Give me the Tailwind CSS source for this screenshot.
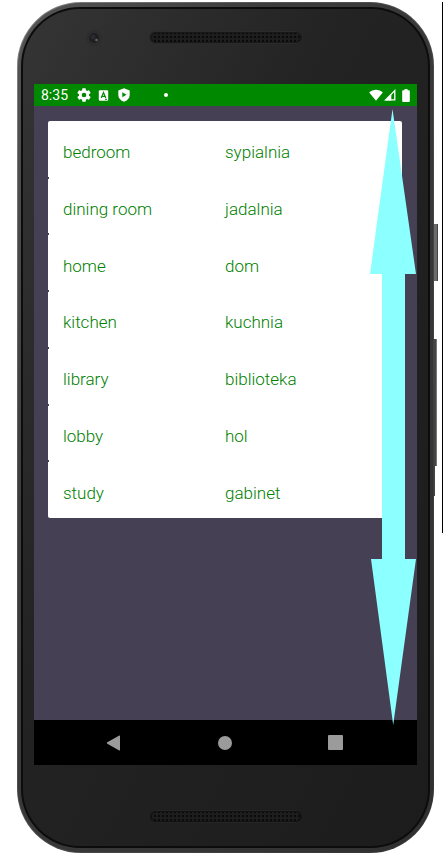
<!DOCTYPE html>
<html lang="en">
<head>
<meta charset="utf-8">
<meta name="viewport" content="width=device-width, initial-scale=1">
<title>Vocabulary: rooms</title>
<script src="https://cdn.jsdelivr.net/npm/@tailwindcss/browser@4"></script>
</head>
<body class="bg-white font-[Roboto,sans-serif]">
<main class="relative pt-[2px] pr-[9px] pb-[2px] pl-[17px]">
  <!-- page rule at the right edge -->
  <div class="absolute top-[2px] right-0 h-[531px] w-px bg-black"></div>

  <div class="relative">
    <!-- side buttons -->
    <div class="absolute top-[222px] -right-[4px] h-[57px] w-[4px] border-r border-[#444] bg-[#6c6c6c]"></div>
    <div class="absolute top-[337px] -right-[3px] h-[127px] w-[3px] border-r border-[#777] bg-[#444]"></div>
    <div class="absolute top-[337px] -right-px h-[157px] w-px bg-[#444]"></div>

    <!-- outer rim -->
    <div class="relative rounded-[64px] bg-linear-to-br from-[#858585] via-[#555] via-30% to-[#333] p-px">
      <div class="rounded-[63px] bg-linear-to-br from-[#555] via-[#3c3c3c] via-30% to-[#303030] px-[3px] py-[4px]">
        <div class="rounded-[59px] bg-[#0c0c0c] p-[2px]">
          <div class="rounded-[57px] bg-linear-to-br from-[#353535] via-[#232323] via-40% to-[#1c1c1c] px-[11px]">

            <!-- earpiece and camera -->
            <div class="relative flex h-[75px] items-start justify-center pt-[22px]">
              <svg class="absolute top-[20px] left-[51px] h-[18px] w-[18px]" viewBox="0 0 18 18" aria-hidden="true">
                <circle cx="9" cy="9" r="8" fill="#2d2d2d"/>
                <circle cx="9" cy="9" r="5" fill="#1f1f20"/>
                <circle cx="8" cy="8" r="2.500" fill="#2a2b2f"/>
                <circle cx="11.500" cy="11" r="1.300" fill="#606266"/>
              </svg>
              <svg class="h-[13px] w-[154px]" viewBox="0 0 154 13" aria-hidden="true">
                <defs><pattern id="mesh" width="4" height="4" patternUnits="userSpaceOnUse"><rect width="4" height="4" fill="#1e1e1e"/><circle cx="2" cy="2" r="1.200" fill="#0a0a0a"/></pattern></defs>
                <rect x=".5" y=".5" width="153" height="12" rx="6" fill="#181818" stroke="#2b2b2b"/>
                <rect x="3" y="2" width="148" height="9" rx="4.500" fill="url(#mesh)"/>
              </svg>
            </div>

            <!-- screen -->
            <div class="relative flex flex-col bg-[#454053]">
              <header class="flex h-[22px] items-center justify-between bg-[#008800] px-[7px] text-white">
                <div class="flex items-center">
                  <span class="w-[36px] text-[14px] leading-[22px]">8:35</span>
                  <svg class="h-[14px] w-[14px]" viewBox="2 2 20 20" fill="currentColor" aria-hidden="true"><path d="M19.140 12.940c.04-.3.06-.61.06-.94s-.02-.64-.07-.94l2.030-1.580a.49.49 0 0 0 .12-.61l-1.920-3.320a.49.49 0 0 0-.59-.22l-2.390.96a7 7 0 0 0-1.620-.94l-.36-2.540A.48.48 0 0 0 13.920 2.400h-3.840a.47.47 0 0 0-.47.41l-.36 2.540c-.59.24-1.130.57-1.620.94l-2.390-.96a.47.47 0 0 0-.59.22L2.740 8.870a.47.47 0 0 0 .12.61l2.030 1.580a7 7 0 0 0 0 1.880l-2.030 1.580a.49.49 0 0 0-.12.61l1.920 3.320c.12.22.37.29.59.22l2.390-.96c.5.38 1.030.7 1.620.94l.36 2.540c.05.24.24.41.48.41h3.840c.24 0 .44-.17.47-.41l.36-2.540c.59-.24 1.130-.56 1.620-.94l2.390.96c.22.08.47 0 .59-.22l1.920-3.320a.47.47 0 0 0-.12-.61zM12 15.300a3.300 3.300 0 1 1 0-6.600 3.300 3.300 0 0 1 0 6.600z"/></svg>
                  <svg class="ml-[7px] h-[11px] w-[11px]" viewBox="0 0 11 11" aria-hidden="true"><rect x=".8" y=".3" width="9.400" height="10.400" rx="1" fill="#fff"/><path d="M3.200 8 5.500 2.500 7.800 8M4 6.300h3" fill="none" stroke="#008800" stroke-width="1.200"/><path d="M7 9.300h2" stroke="#008800"/></svg>
                  <svg class="ml-[8px] h-[14px] w-[14px]" viewBox="0 0 14 14" aria-hidden="true"><path d="M7 .2 12.700 2.600V7c0 3-2.200 5.600-5.700 6.800C3.500 12.600 1.300 10 1.300 7V2.600z" fill="#fff"/><path d="M5.300 4.300v5L9.500 6.800z" fill="#008800"/></svg>
                  <span class="ml-[33px] h-[4px] w-[4px] rounded-full bg-white"></span>
                </div>
                <div class="flex items-center">
                  <svg class="h-[12px] w-[14px]" viewBox="0 0 14 12" fill="#fff" aria-hidden="true"><path d="M7 11.800.2 3.400C4-.2 10-.2 13.800 3.400z"/></svg>
                  <svg class="ml-px h-[12px] w-[12px]" viewBox="0 0 12 12" aria-hidden="true"><path d="M1.600 10.900 10.800 1.600V10.900z" fill="none" stroke="#fff" stroke-width="1.300"/><path d="M1 11.500 7.300 5V11.500z" fill="#fff"/></svg>
                  <svg class="ml-[6px] h-[13px] w-[8px]" viewBox="0 0 8 13" fill="#fff" aria-hidden="true"><path d="M2.500 0h3v1.300H7c.5 0 .8.300.8.800v10c0 .5-.3.900-.8.900H1c-.5 0-.8-.4-.8-.9v-10c0-.5.3-.8.8-.8h1.500z"/></svg>
                </div>
              </header>

              <section class="pt-[15px] pr-[15px] pb-[202px] pl-[14px]">
                <table class="h-[397px] w-full table-fixed rounded-[2px] bg-white text-left text-[17px] leading-[20px] font-light text-[#008000]">
                  <colgroup><col class="w-[50%]"><col></colgroup>
                  <tbody>
                    <tr><td class="relative pt-[6px] pl-[15px]">bedroom<span class="absolute -bottom-px left-0 h-[2px] w-px bg-[#454053]"></span></td><td class="pt-[6px]">sypialnia</td></tr>
                    <tr><td class="relative pt-[6px] pl-[15px]">dining room<span class="absolute -bottom-px left-0 h-[2px] w-px bg-[#454053]"></span></td><td class="pt-[6px]">jadalnia</td></tr>
                    <tr><td class="relative pt-[6px] pl-[15px]">home<span class="absolute -bottom-px left-0 h-[2px] w-px bg-[#454053]"></span></td><td class="pt-[6px]">dom</td></tr>
                    <tr><td class="relative pt-[6px] pl-[15px]">kitchen<span class="absolute -bottom-px left-0 h-[2px] w-px bg-[#454053]"></span></td><td class="pt-[6px]">kuchnia</td></tr>
                    <tr><td class="relative pt-[6px] pl-[15px]">library<span class="absolute -bottom-px left-0 h-[2px] w-px bg-[#454053]"></span></td><td class="pt-[6px]">biblioteka</td></tr>
                    <tr><td class="relative pt-[6px] pl-[15px]">lobby<span class="absolute -bottom-px left-0 h-[2px] w-px bg-[#454053]"></span></td><td class="pt-[6px]">hol</td></tr>
                    <tr><td class="pt-[6px] pl-[15px]">study</td><td class="pt-[6px]">gabinet</td></tr>
                  </tbody>
                </table>
              </section>

              <nav class="flex h-[45px] items-center justify-between bg-black pr-[74px] pl-[72px]" aria-label="System">
                <button type="button" aria-label="Back" class="h-[16px] w-[16px]"><svg class="h-[16px] w-[16px]" viewBox="0 0 16 16" fill="#9b9b9b"><path d="M1.300 7.300 13.300.5c.4-.2.7 0 .7.500v14c0 .5-.3.700-.7.500L1.300 8.700c-.6-.4-.6-1 0-1.400z"/></svg></button>
                <button type="button" aria-label="Home" class="h-[14px] w-[14px] rounded-full bg-[#9b9b9b]"></button>
                <button type="button" aria-label="Overview" class="h-[15px] w-[15px] rounded-[1px] bg-[#9b9b9b]"></button>
              </nav>

              <!-- scroll direction arrow -->
              <svg class="absolute top-[25px] right-px h-[616px] w-[46px]" viewBox="0 0 46 616" fill="#8cffff" aria-hidden="true"><path d="M22.500 0 46 165H35V450H46L23.200 616 1 450H12V165H0z"/></svg>
            </div>

            <!-- bottom speaker -->
            <div class="flex h-[81px] items-start justify-center pt-[45px]">
              <svg class="h-[13px] w-[154px]" viewBox="0 0 154 13" aria-hidden="true">
                <rect x=".5" y=".5" width="153" height="12" rx="6" fill="#121212" stroke="#242424"/>
                <rect x="3" y="2" width="148" height="9" rx="4.500" fill="url(#mesh)"/>
              </svg>
            </div>
          </div>
        </div>
      </div>
    </div>
  </div>
</main>
</body>
</html>
